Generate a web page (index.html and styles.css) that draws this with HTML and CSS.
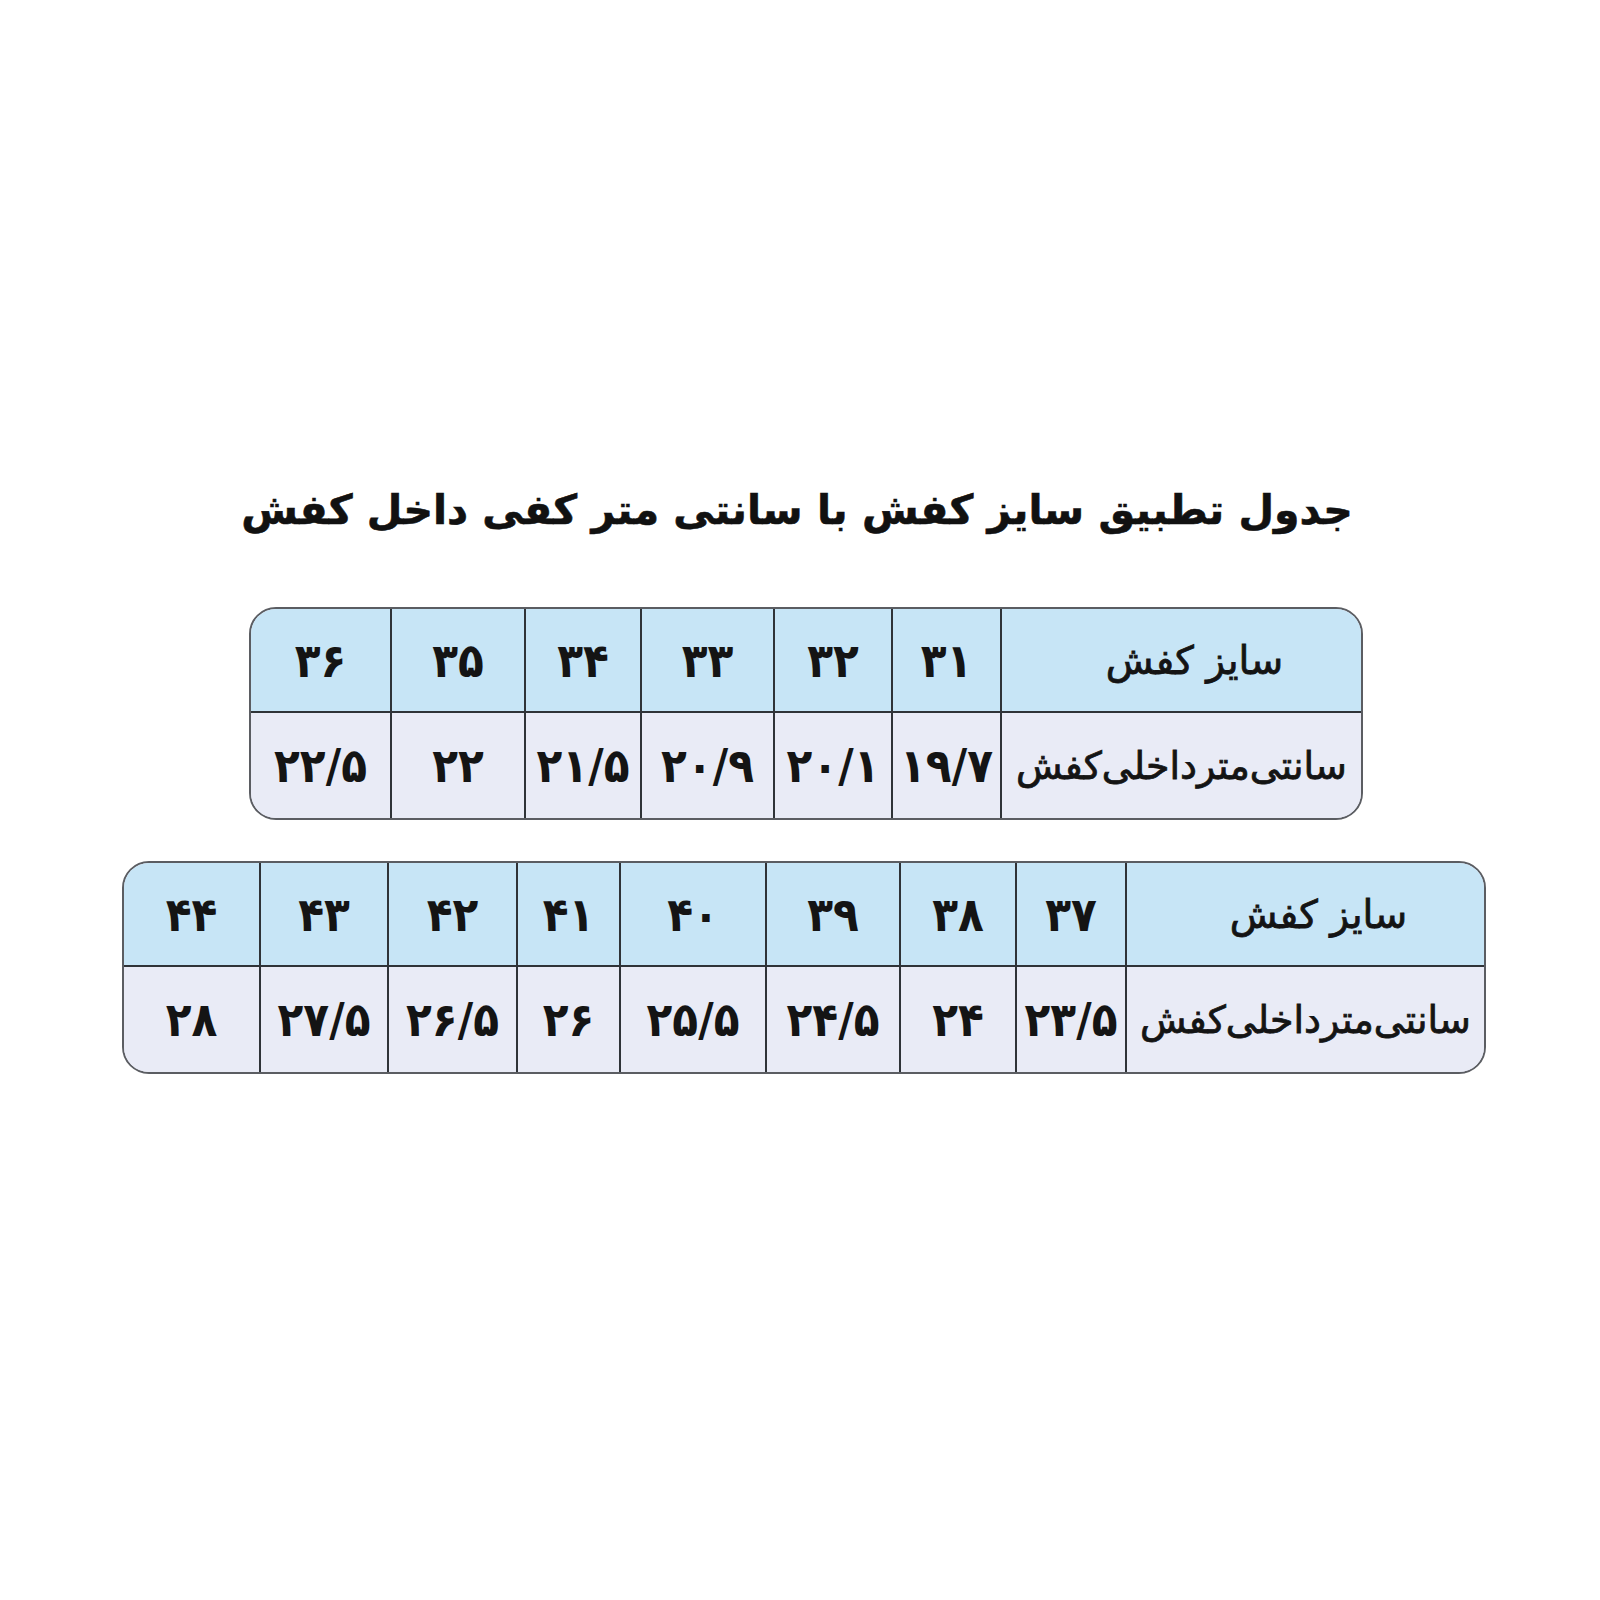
FILE: index.html
```html
<!DOCTYPE html>
<html lang="fa" dir="rtl">
<head>
<meta charset="utf-8">
<title>جدول سایز کفش</title>
<link rel="stylesheet" href="styles.css">
</head>
<body>
<main class="page">
  <h1 class="title">جدول تطبیق سایز کفش با سانتی متر کفی داخل کفش</h1>

  <div class="chart chart-one">
    <table class="sizes">
      <colgroup>
        <col style="width:361px"><col style="width:109px"><col style="width:118px"><col style="width:133px"><col style="width:116px"><col style="width:134px"><col style="width:139px">
      </colgroup>
      <tr class="head">
        <th class="label">سایز کفش</th>
        <td>۳۱</td><td>۳۲</td><td>۳۳</td><td>۳۴</td><td>۳۵</td><td>۳۶</td>
      </tr>
      <tr class="body">
        <th class="label small">سانتی‌متر‌داخلی‌کفش</th>
        <td>۱۹/۷</td><td>۲۰/۱</td><td>۲۰/۹</td><td>۲۱/۵</td><td>۲۲</td><td>۲۲/۵</td>
      </tr>
    </table>
  </div>

  <div class="chart chart-two">
    <table class="sizes">
      <colgroup>
        <col style="width:359px"><col style="width:110px"><col style="width:116px"><col style="width:134px"><col style="width:146px"><col style="width:103px"><col style="width:129px"><col style="width:128px"><col style="width:135px">
      </colgroup>
      <tr class="head">
        <th class="label">سایز کفش</th>
        <td>۳۷</td><td>۳۸</td><td>۳۹</td><td>۴۰</td><td>۴۱</td><td>۴۲</td><td>۴۳</td><td>۴۴</td>
      </tr>
      <tr class="body">
        <th class="label small">سانتی‌متر‌داخلی‌کفش</th>
        <td>۲۳/۵</td><td>۲۴</td><td>۲۴/۵</td><td>۲۵/۵</td><td>۲۶</td><td>۲۶/۵</td><td>۲۷/۵</td><td>۲۸</td>
      </tr>
    </table>
  </div>
</main>
</body>
</html>
```

FILE: styles.css
```css
html, body {
  margin: 0;
  padding: 0;
  background: #ffffff;
}

body {
  font-family: "DejaVu Sans", "Noto Sans", sans-serif;
  color: #141414;
}

.page {
  width: 1600px;
  height: 1600px;
  box-sizing: border-box;
  padding-top: 472px;
  display: flex;
  flex-direction: column;
  align-items: center;
}

.title {
  margin: 0 6px 0 0;
  font-size: 41px;
  font-weight: bold;
  line-height: 76px;
  color: #111;
  -webkit-text-stroke: 0.6px #111;
}

.chart {
  border: 2px solid #5b5d62;
  border-radius: 27px;
  overflow: hidden;
  background: #e9ebf6;
}

.chart-one {
  margin-top: 59px;
  margin-left: 12px;
  width: 1110px;
}

.chart-two {
  margin-top: 41px;
  margin-left: 8px;
  width: 1360px;
}

.sizes {
  border-collapse: separate;
  border-spacing: 0;
  table-layout: fixed;
  width: 100%;
}

.sizes th,
.sizes td {
  padding: 0;
  text-align: center;
  vertical-align: middle;
  border-left: 2px solid #2f3338;
  font-weight: normal;
}

.sizes th:last-child,
.sizes td:last-child {
  border-left: none;
}

.head th,
.head td {
  background: #c7e5f6;
  height: 102px;
  border-bottom: 2px solid #2f3338;
}

.body th,
.body td {
  background: #e9ebf6;
  height: 105px;
}

.sizes td {
  font-family: "DejaVu Sans Condensed", "DejaVu Sans", sans-serif;
  font-size: 47px;
  font-weight: bold;
  letter-spacing: -2px;
}

.label {
  font-size: 39px;
  text-align: center;
  -webkit-text-stroke: 0.8px #141414;
}

.head .label {
  padding-left: 26px;
}

.label.small {
  font-size: 38px;
  white-space: nowrap;
}
```
